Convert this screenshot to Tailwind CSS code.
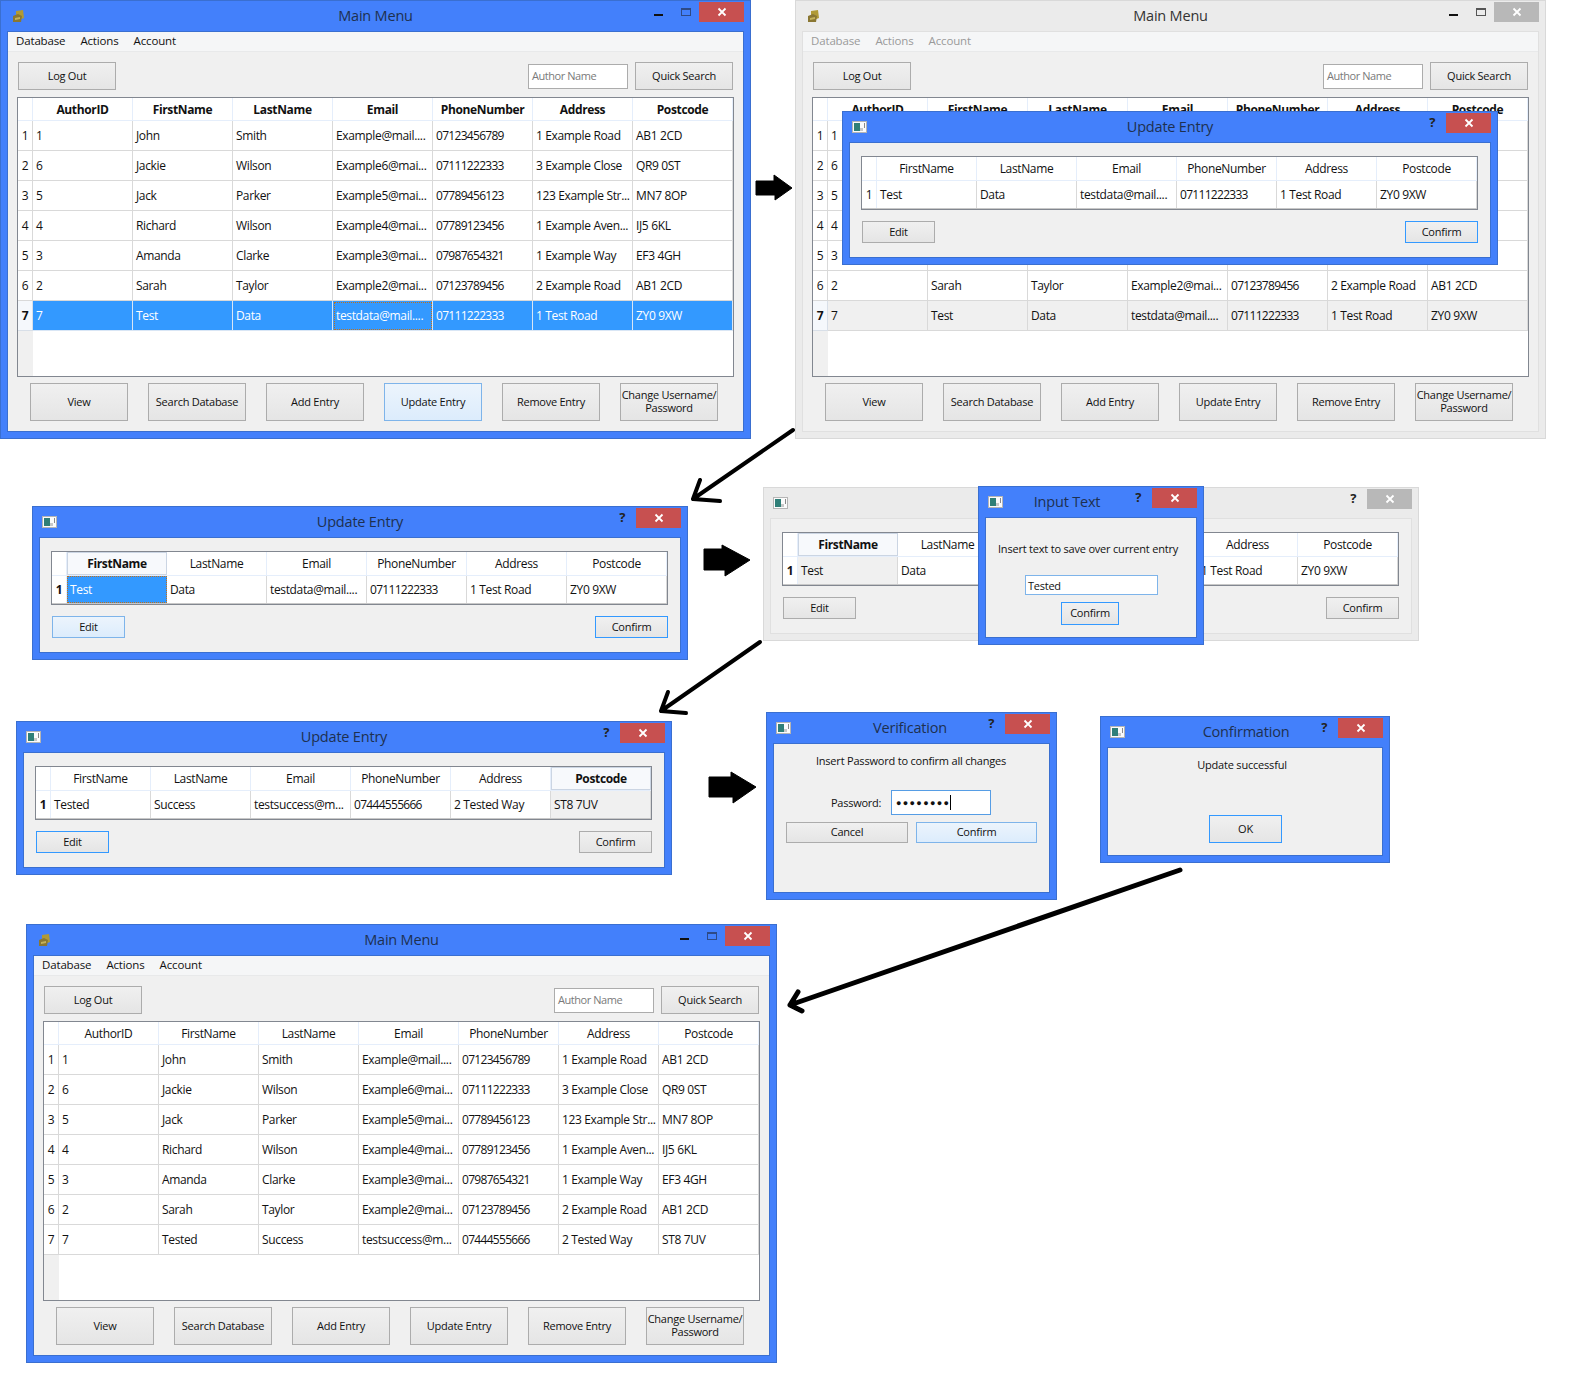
<!DOCTYPE html>
<html lang="en">
<head>
<meta charset="UTF-8">
<title>Update Entry flow</title>
<script src="https://cdn.jsdelivr.net/npm/@tailwindcss/browser@4"></script>
</head>
<body class="bg-white">
<div id="canvas" class="relative w-[1584px] h-[1400px] overflow-hidden font-['Open_Sans',sans-serif] text-[12px] leading-none text-[#111] tracking-[-0.35px]"></div>

<script>
// small helpers, every window on the canvas is built from these
const BTN = 'flex items-center justify-center text-center pb-[2px] text-[11px] tracking-[-0.25px] border border-[#acacac] bg-gradient-to-b from-[#f0f0f0] to-[#e5e5e5]'
const BTN_HOVER = 'flex items-center justify-center text-center pb-[2px] text-[11px] tracking-[-0.25px] border border-[#7eb4ea] bg-gradient-to-b from-[#ecf4fc] to-[#dcecfc]'
const BTN_FOCUS = 'flex items-center justify-center text-center pb-[2px] text-[11px] tracking-[-0.25px] border border-[#3399ff] bg-gradient-to-b from-[#f0f0f0] to-[#e5e5e5]'
const LABEL = 'text-center text-[11px] leading-[12px] tracking-[-0.2px]'

const bookIcon = `<svg width="13" height="13" viewBox="0 0 13 13"><path d="M4 1 L11 0 L12 8 L4 11Z" fill="#b09a36"/><path d="M1 6 L6 4 L10 6 L9 12 L1 12Z" fill="#8a7732"/><path d="M3 8 L8 7 L8 9 L3 10Z" fill="#c4b25a"/></svg>`
const dialogIcon = `<svg width="15" height="12" viewBox="0 0 15 12"><rect x="0" y="0" width="15" height="12" fill="#e8e8e8"/><rect x="0.5" y="0.5" width="14" height="11" fill="#fbfbfb" stroke="#b5b5b5"/><rect x="2" y="2" width="6" height="8" fill="#2f7f78"/><rect x="8" y="7" width="3" height="3" fill="#c8c8c8"/><rect x="12" y="2" width="1" height="5" fill="#8a8a8a"/></svg>`
const cross = c => `<svg width="10" height="10" viewBox="0 0 10 10"><path d="M1.5 1.5 L8.5 8.5 M8.5 1.5 L1.5 8.5" stroke="${c}" stroke-width="1.8"/></svg>`

function frame({x, y, w, h, faded}) {
  const shell = faded ? 'bg-[#ebebeb] border border-[#d9d9d9]' : 'bg-[#4380fb] border border-[#3a6fd0]'
  return `<div class="absolute flex flex-col ${shell}" style="left:${x}px;top:${y}px;width:${w}px;height:${h}px">`
}

function closeBtn(faded, w) {
  const c = faded ? 'bg-[#b8b8b8]' : 'bg-[#c75050]'
  return `<div class="absolute top-[1px] right-[6px] h-[20px] flex items-center justify-center ${c}" style="width:${w}px">${cross('#fff')}</div>`
}

function titleBar({title, faded, icon, help, cx, closeW = 45}) {
  const color = faded ? 'text-[#333]' : 'text-[#1e3050]'
  const pos = cx ? `left:${cx}px;transform:translateX(-50%)` : 'left:0;right:0'
  return `<div class="relative shrink-0 h-[30px]">
    <div class="absolute ${icon === 'book' ? 'left-[11px] top-[9px]' : 'left-[9px] top-[9px]'}">${icon === 'book' ? bookIcon : dialogIcon}</div>
    <div class="absolute top-[6px] text-center text-[14.5px] leading-[18px] tracking-[-0.2px] ${color}" style="${pos}">${title}</div>
    ${help ? `<div class="absolute top-[2px] right-[62px] text-[13px] leading-[16px] font-bold text-[#222]">?</div>` : ''}
    ${help ? '' : `<div class="absolute top-[13px] right-[87px] w-[9px] h-[2px] bg-[#111]"></div>
    <div class="absolute top-[7px] right-[59px] w-[10px] h-[8px] border border-t-2 ${faded ? 'border-[#555]' : 'border-[#2e4a86]'}"></div>`}
    ${closeBtn(faded, closeW)}
  </div>`
}

const client = faded => `<div class="relative flex-1 mx-[6px] mb-[6px] flex flex-col bg-[#f0f0f0] ${faded ? 'border border-[#e0e0e0]' : 'border border-[#3a6fd0]'}">`

// --- main window ---
const HEAD = ['AuthorID','FirstName','LastName','Email','PhoneNumber','Address','Postcode']
const PEOPLE = [
  ['1','John','Smith','Example@mail....','07123456789','1 Example Road','AB1 2CD'],
  ['6','Jackie','Wilson','Example6@mai...','07111222333','3 Example Close','QR9 0ST'],
  ['5','Jack','Parker','Example5@mai...','07789456123','123 Example Str...','MN7 8OP'],
  ['4','Richard','Wilson','Example4@mai...','07789123456','1 Example Aven...','IJ5 6KL'],
  ['3','Amanda','Clarke','Example3@mai...','07987654321','1 Example Way','EF3 4GH'],
  ['2','Sarah','Taylor','Example2@mai...','07123789456','2 Example Road','AB1 2CD'],
]

function mainTable(last, mode) {
  const gridCols = 'grid grid-cols-[15px_repeat(7,100px)]'
  let html = `<div class="mx-[9px] mt-[7px] h-[280px] border border-[#828790] bg-white relative overflow-hidden">
    <div class="absolute left-0 top-[22px] bottom-0 w-[15px] bg-[#f0f0f0]"></div>
    <div class="relative ${gridCols} h-[23px] border-b border-[#e5eefb]">
      <div class="border-r border-[#e5eefb]"></div>`
  HEAD.forEach(h => {
    html += `<div class="flex items-center justify-center pt-[2px] border-r border-[#e5eefb] ${mode ? 'font-bold' : ''}">${h}</div>`
  })
  html += `</div>`
  const rows = PEOPLE.concat([last])
  rows.forEach((r, i) => {
    const isLast = i === 6
    const sel = isLast && mode === 'selected'
    const inactive = isLast && mode === 'inactive'
    html += `<div class="relative ${gridCols} h-[30px]">
      <div class="flex items-center justify-center border-r border-b ${isLast && mode ? 'font-bold border-[#d8dfe8] bg-[#f5f8fc]' : 'border-[#d9d9d9] bg-white'}">${i + 1}</div>`
    r.forEach((c, j) => {
      const bg = sel ? 'bg-[#3399ff] text-white border-[#d9e6f5]' : inactive ? 'bg-[#f0f0f0] border-[#d9d9d9]' : 'bg-white border-[#d9d9d9]'
      const focus = sel && j === 3 ? 'outline-1 outline-dotted outline-[#c0701a] -outline-offset-2' : ''
      const digits = j === 4 ? 'tracking-[-0.7px]' : ''
      html += `<div class="flex items-center pl-[3px] whitespace-nowrap overflow-hidden border-r border-b ${bg} ${focus} ${digits}">${c}</div>`
    })
    html += `</div>`
  })
  return html + `</div>`
}

function mainWindow({x, y, faded, mode, last, hover}) {
  const labels = ['View','Search Database','Add Entry','Update Entry','Remove Entry','Change Username/<br>Password']
  let html = frame({x, y, w: 751, h: 439, faded}) + titleBar({title: 'Main Menu', faded, icon: 'book'}) + client(faded)
  html += `<div class="h-[20px] shrink-0 flex items-center gap-[15px] pl-[8px] pb-[2px] text-[11.5px] tracking-[-0.15px] bg-[#f5f6f7] border-b border-[#e8e9ea] ${faded ? 'text-[#9a9a9a]' : ''}"><span>Database</span><span>Actions</span><span>Account</span></div>`
  html += `<div class="flex items-center justify-between pl-[10px] pr-[10px] mt-[10px] h-[28px]">
    <div class="${BTN} w-[98px] h-[28px]">Log Out</div>
    <div class="flex items-center gap-[7px]">
      <div class="w-[100px] h-[25px] border border-[#acacac] bg-white flex items-center pl-[3px] pb-[1px] text-[11px] tracking-[-0.45px] text-[#7a7a7a]">Author Name</div>
      <div class="${BTN} w-[98px] h-[28px]">Quick Search</div>
    </div>
  </div>`
  html += mainTable(last, mode)
  html += `<div class="flex gap-[20px] pl-[22px] mt-[6px]">`
  labels.forEach((l, i) => {
    html += `<div class="${hover && i === 3 ? BTN_HOVER : BTN} w-[98px] h-[38px] leading-[13px]">${l}</div>`
  })
  return html + `</div></div></div>`
}

// --- update entry dialog ---
function updateDialog({x, y, faded, row, boldCol, selCell, inactiveCell, editCls, confirmCls, rowBold}) {
  const cols = ['FirstName','LastName','Email','PhoneNumber','Address','Postcode']
  let html = frame({x, y, w: 656, h: 154, faded}) + titleBar({title: 'Update Entry', faded, icon: 'dialog', help: true}) + client(faded)
  html += `<div class="ml-[11px] mr-[12px] mt-[13px] h-[54px] border border-[#828790] bg-white">
    <div class="grid grid-cols-[15px_repeat(6,100px)] h-[24px] border-b border-[#e5eefb]">
      <div class="border-r border-[#e5eefb]"></div>`
  cols.forEach((c, i) => {
    const b = i === boldCol ? 'font-bold border border-[#cbd5e3] bg-[#f7f9fc]' : 'border-r border-[#e5eefb]'
    html += `<div class="flex items-center justify-center ${b}">${c}</div>`
  })
  html += `</div><div class="grid grid-cols-[15px_repeat(6,100px)] h-[28px] border-b border-[#c8c8c8]">
    <div class="flex items-center justify-center border-r border-[#e5eefb] ${rowBold ? 'font-bold' : ''}">1</div>`
  row.forEach((c, i) => {
    let cell = 'bg-white border-r border-[#d9d9d9]'
    if (i === selCell) cell = 'bg-[#3399ff] text-white outline-1 outline-dotted outline-[#c0701a] -outline-offset-1'
    if (i === inactiveCell) cell = 'bg-[#f0f0f0] border-r border-[#d9d9d9]'
    const digits = i === 3 ? 'tracking-[-0.7px]' : ''
    html += `<div class="flex items-center pl-[3px] whitespace-nowrap overflow-hidden ${cell} ${digits}">${c}</div>`
  })
  html += `</div></div>
  <div class="flex justify-between mx-[12px] mt-[11px]">
    <div class="${editCls} w-[73px] h-[22px]">Edit</div>
    <div class="${confirmCls} w-[73px] h-[22px]">Confirm</div>
  </div></div></div>`
  return html
}

function inputDialog() {
  return frame({x: 978, y: 486, w: 226, h: 159}) + titleBar({title: 'Input Text', icon: 'dialog', help: true, cx: 88}) + client() + `
    <div class="mt-[25px] pr-[6px] ${LABEL}">Insert text to save over current entry</div>
    <div class="mt-[20px] ml-[39px] w-[133px] h-[20px] border border-[#7eb4ea] bg-white flex items-center pl-[2px] text-[11px] tracking-[-0.25px]">Tested</div>
    <div class="${BTN_FOCUS} mt-[7px] ml-[75px] w-[58px] h-[23px]">Confirm</div>
  </div></div>`
}

function verifyDialog() {
  return frame({x: 766, y: 712, w: 291, h: 188}) + titleBar({title: 'Verification', icon: 'dialog', help: true, cx: 143}) + client() + `
    <div class="mt-[11px] pr-[1px] ${LABEL}">Insert Password to confirm all changes</div>
    <div class="mt-[23px] flex items-center pl-[57px] gap-[10px]"><span class="w-[50px] text-[11px] tracking-[-0.25px] whitespace-nowrap">Password:</span>
      <div class="w-[100px] h-[25px] border border-[#569de5] bg-white flex items-center pl-[4px] text-[9px] tracking-[1.35px]">●●●●●●●●<span class="w-px h-[15px] bg-black"></span></div>
    </div>
    <div class="mt-[7px] flex gap-[8px] pl-[12px]">
      <div class="${BTN} w-[122px] h-[21px]">Cancel</div>
      <div class="${BTN_HOVER} w-[121px] h-[21px]">Confirm</div>
    </div>
  </div></div>`
}

function confirmDialog() {
  return frame({x: 1100, y: 716, w: 290, h: 147}) + titleBar({title: 'Confirmation', icon: 'dialog', help: true, cx: 145}) + client() + `
    <div class="mt-[11px] pr-[6px] ${LABEL}">Update successful</div>
    <div class="${BTN_FOCUS} mt-[44px] ml-[101px] w-[73px] h-[28px]">OK</div>
  </div></div>`
}

const OLD = ['7','Test','Data','testdata@mail....','07111222333','1 Test Road','ZY0 9XW']
const NEW = ['7','Tested','Success','testsuccess@m...','07444555666','2 Tested Way','ST8 7UV']

let page = ''
page += mainWindow({x: 0, y: 0, mode: 'selected', last: OLD, hover: true})
page += mainWindow({x: 795, y: 0, faded: true, mode: 'inactive', last: OLD})
page += updateDialog({x: 842, y: 111, row: OLD.slice(1), editCls: BTN, confirmCls: BTN_FOCUS})
page += updateDialog({x: 32, y: 506, row: OLD.slice(1), boldCol: 0, selCell: 0, editCls: BTN_HOVER, confirmCls: BTN_FOCUS, rowBold: true})
page += updateDialog({x: 763, y: 487, faded: true, row: OLD.slice(1), boldCol: 0, inactiveCell: 0, editCls: BTN, confirmCls: BTN, rowBold: true})
page += inputDialog()
page += updateDialog({x: 16, y: 721, row: NEW.slice(1), boldCol: 5, inactiveCell: 5, editCls: BTN_FOCUS, confirmCls: BTN, rowBold: true})
page += verifyDialog()
page += confirmDialog()
page += mainWindow({x: 26, y: 924, last: NEW})

// hand drawn arrows go over everything
page += `<svg class="absolute left-0 top-0" width="1584" height="1400" viewBox="0 0 1584 1400" fill="none">
  <g fill="#000" stroke="#000" stroke-width="1" stroke-linejoin="round">
    <path d="M756 181 H774 V175 L792 188 L775 200 V195 H756Z"/>
    <path d="M704 549 H722 V545 L750 560 L725 576 V570 H704Z"/>
    <path d="M709 777 H731 V772 L756 787 L733 803 V797 H709Z"/>
  </g>
  <g stroke="#000" stroke-linecap="round" stroke-linejoin="round">
    <path stroke-width="4" d="M793 430 L693 499 M693 499 L700 480 M693 499 L720 501"/>
    <path stroke-width="4" d="M760 642 L661 711 M661 711 L668 692 M661 711 L686 713"/>
    <path stroke-width="5" d="M1180 870 L790 1005 M790 1005 L798 992 M790 1005 L802 1011"/>
  </g>
</svg>`

document.getElementById('canvas').innerHTML = page
</script>
</body>
</html>
